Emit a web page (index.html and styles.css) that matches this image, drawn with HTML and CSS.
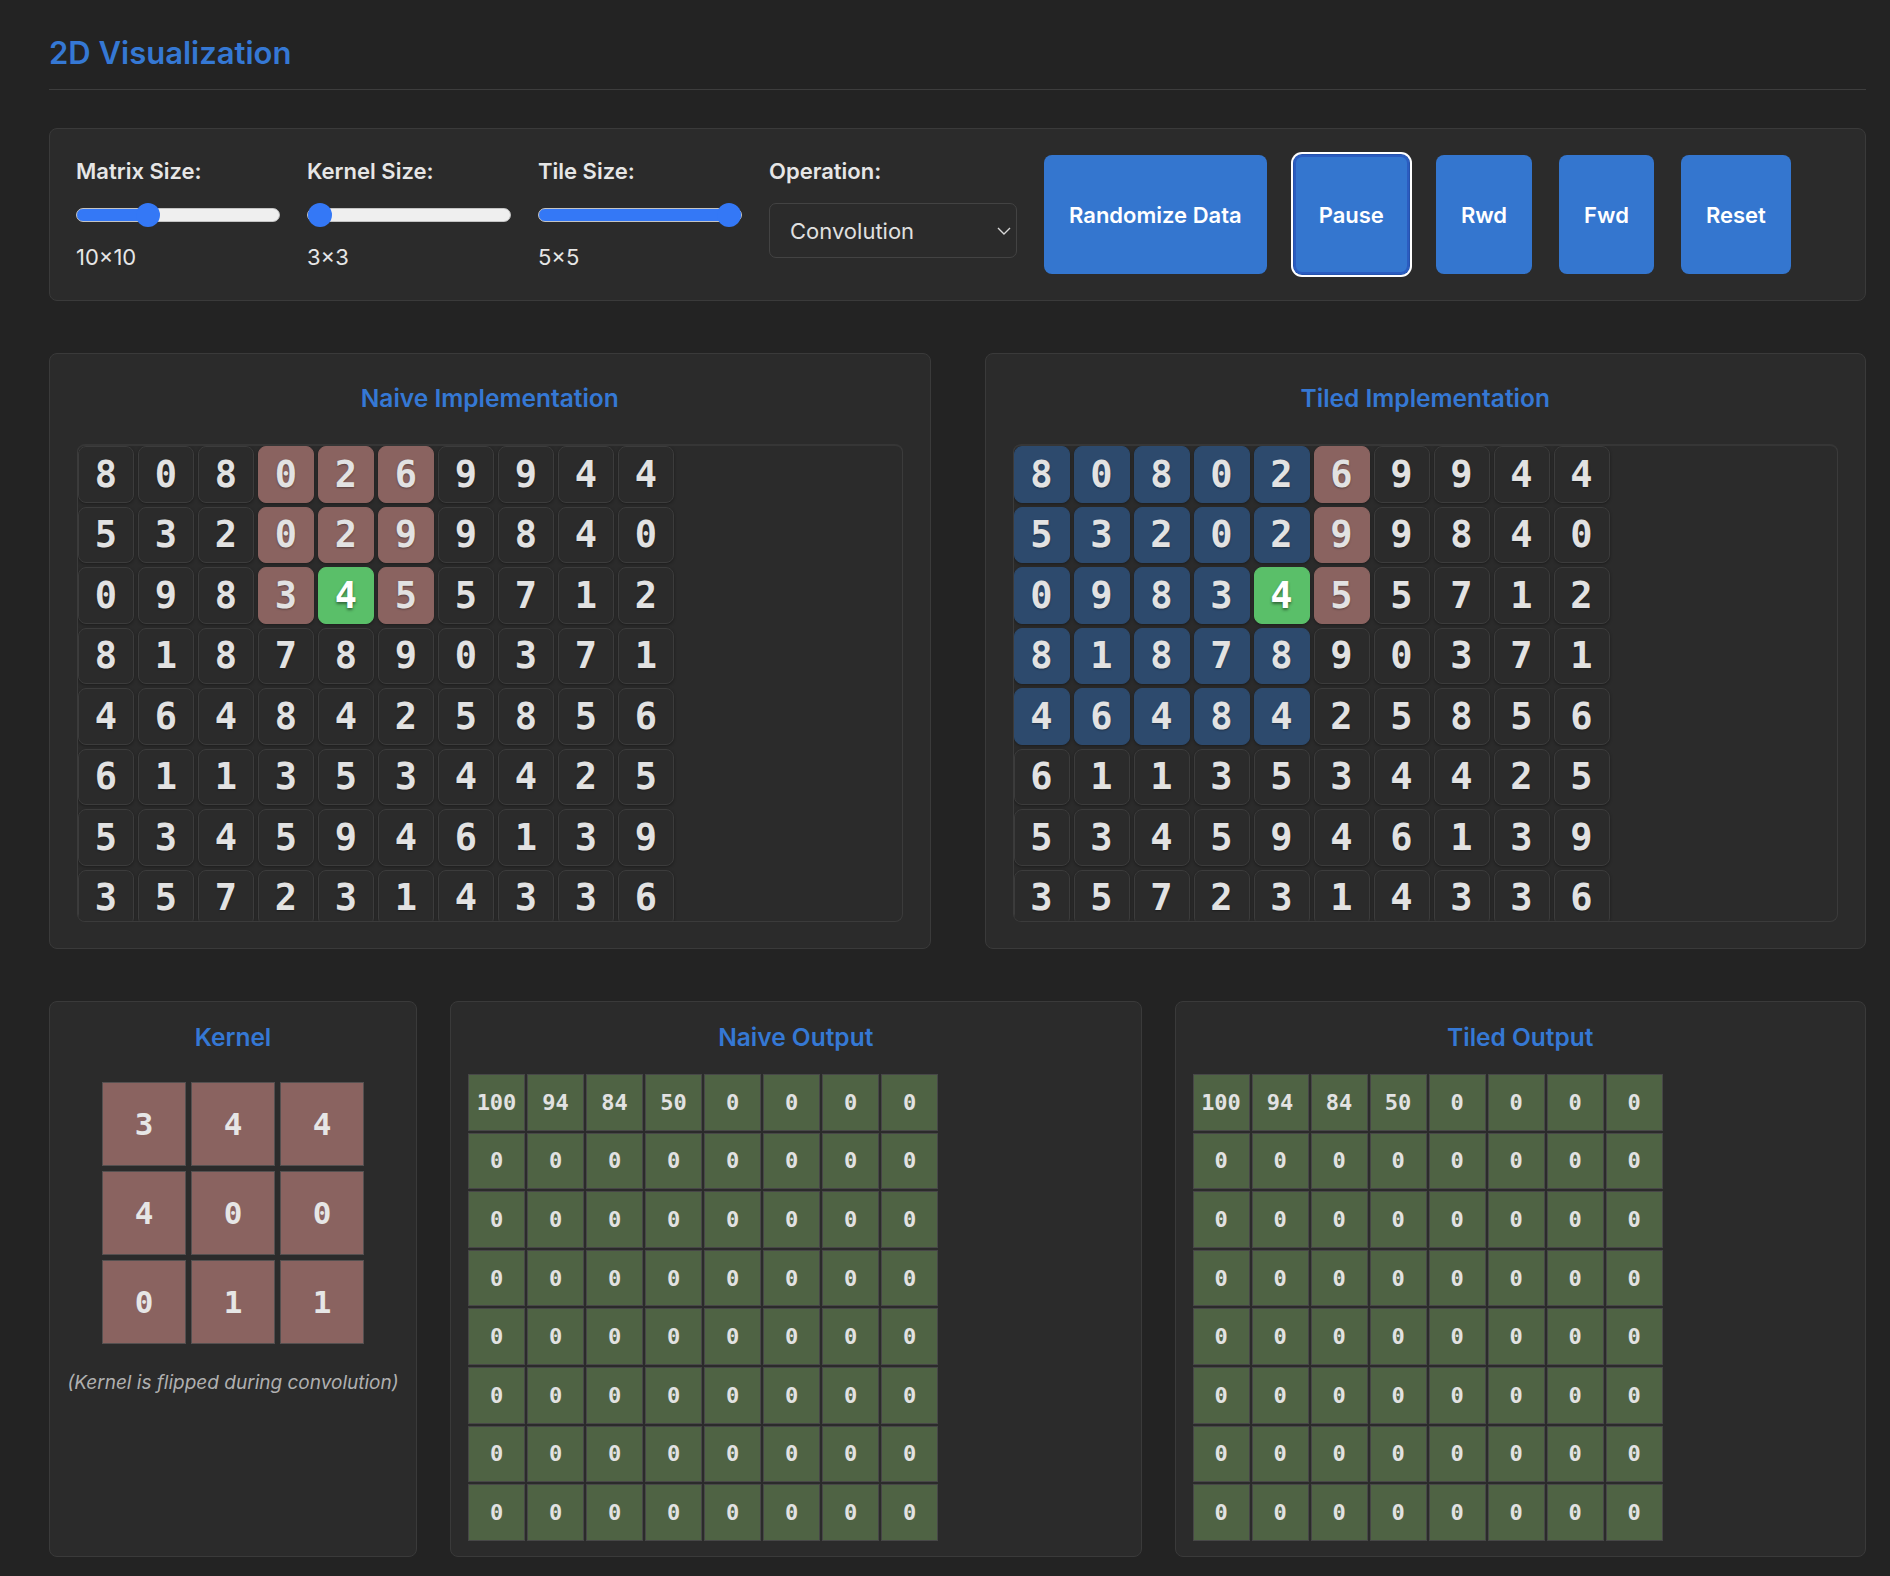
FILE: index.html
```html
<!DOCTYPE html>
<html lang="en">
<head>
<meta charset="utf-8">
<title>2D Visualization</title>
<link rel="stylesheet" href="styles.css">
</head>
<body>
<div class="page">
  <h2 class="section-title">2D Visualization</h2>

  <div class="controls">
    <div class="control">
      <label class="control-label">Matrix Size:</label>
      <input class="slider" type="range" min="5" max="20" value="10" style="--fill: 36%">
      <span class="control-value">10×10</span>
    </div>
    <div class="control">
      <label class="control-label">Kernel Size:</label>
      <input class="slider" type="range" min="3" max="7" step="2" value="3" style="--fill: 6%">
      <span class="control-value">3×3</span>
    </div>
    <div class="control">
      <label class="control-label">Tile Size:</label>
      <input class="slider" type="range" min="2" max="5" value="5" style="--fill: 100%">
      <span class="control-value">5×5</span>
    </div>
    <div class="control">
      <label class="control-label">Operation:</label>
      <div class="select-wrap">
        <select class="select">
          <option>Convolution</option>
        </select>
        <svg class="chev" width="14" height="8" viewBox="0 0 14 8"><path d="M1 1 L7 7 L13 1" stroke="#d8d8d8" stroke-width="1.4" fill="none"/></svg>
      </div>
    </div>
    <button class="btn">Randomize Data</button>
    <button class="btn btn-focus">Pause</button>
    <button class="btn">Rwd</button>
    <button class="btn">Fwd</button>
    <button class="btn">Reset</button>
  </div>

  <div class="viz-row">
    <div class="panel">
      <h3 class="panel-title">Naive Implementation</h3>
      <div class="matrix">
        <div class="mrow"><div class="cell">8</div><div class="cell">0</div><div class="cell">8</div><div class="cell win">0</div><div class="cell win">2</div><div class="cell win">6</div><div class="cell">9</div><div class="cell">9</div><div class="cell">4</div><div class="cell">4</div></div>
        <div class="mrow"><div class="cell">5</div><div class="cell">3</div><div class="cell">2</div><div class="cell win">0</div><div class="cell win">2</div><div class="cell win">9</div><div class="cell">9</div><div class="cell">8</div><div class="cell">4</div><div class="cell">0</div></div>
        <div class="mrow"><div class="cell">0</div><div class="cell">9</div><div class="cell">8</div><div class="cell win">3</div><div class="cell cur">4</div><div class="cell win">5</div><div class="cell">5</div><div class="cell">7</div><div class="cell">1</div><div class="cell">2</div></div>
        <div class="mrow"><div class="cell">8</div><div class="cell">1</div><div class="cell">8</div><div class="cell">7</div><div class="cell">8</div><div class="cell">9</div><div class="cell">0</div><div class="cell">3</div><div class="cell">7</div><div class="cell">1</div></div>
        <div class="mrow"><div class="cell">4</div><div class="cell">6</div><div class="cell">4</div><div class="cell">8</div><div class="cell">4</div><div class="cell">2</div><div class="cell">5</div><div class="cell">8</div><div class="cell">5</div><div class="cell">6</div></div>
        <div class="mrow"><div class="cell">6</div><div class="cell">1</div><div class="cell">1</div><div class="cell">3</div><div class="cell">5</div><div class="cell">3</div><div class="cell">4</div><div class="cell">4</div><div class="cell">2</div><div class="cell">5</div></div>
        <div class="mrow"><div class="cell">5</div><div class="cell">3</div><div class="cell">4</div><div class="cell">5</div><div class="cell">9</div><div class="cell">4</div><div class="cell">6</div><div class="cell">1</div><div class="cell">3</div><div class="cell">9</div></div>
        <div class="mrow"><div class="cell">3</div><div class="cell">5</div><div class="cell">7</div><div class="cell">2</div><div class="cell">3</div><div class="cell">1</div><div class="cell">4</div><div class="cell">3</div><div class="cell">3</div><div class="cell">6</div></div>
      </div>
    </div>

    <div class="panel">
      <h3 class="panel-title">Tiled Implementation</h3>
      <div class="matrix">
        <div class="mrow"><div class="cell tile">8</div><div class="cell tile">0</div><div class="cell tile">8</div><div class="cell tile">0</div><div class="cell tile">2</div><div class="cell win">6</div><div class="cell">9</div><div class="cell">9</div><div class="cell">4</div><div class="cell">4</div></div>
        <div class="mrow"><div class="cell tile">5</div><div class="cell tile">3</div><div class="cell tile">2</div><div class="cell tile">0</div><div class="cell tile">2</div><div class="cell win">9</div><div class="cell">9</div><div class="cell">8</div><div class="cell">4</div><div class="cell">0</div></div>
        <div class="mrow"><div class="cell tile">0</div><div class="cell tile">9</div><div class="cell tile">8</div><div class="cell tile">3</div><div class="cell cur">4</div><div class="cell win">5</div><div class="cell">5</div><div class="cell">7</div><div class="cell">1</div><div class="cell">2</div></div>
        <div class="mrow"><div class="cell tile">8</div><div class="cell tile">1</div><div class="cell tile">8</div><div class="cell tile">7</div><div class="cell tile">8</div><div class="cell">9</div><div class="cell">0</div><div class="cell">3</div><div class="cell">7</div><div class="cell">1</div></div>
        <div class="mrow"><div class="cell tile">4</div><div class="cell tile">6</div><div class="cell tile">4</div><div class="cell tile">8</div><div class="cell tile">4</div><div class="cell">2</div><div class="cell">5</div><div class="cell">8</div><div class="cell">5</div><div class="cell">6</div></div>
        <div class="mrow"><div class="cell">6</div><div class="cell">1</div><div class="cell">1</div><div class="cell">3</div><div class="cell">5</div><div class="cell">3</div><div class="cell">4</div><div class="cell">4</div><div class="cell">2</div><div class="cell">5</div></div>
        <div class="mrow"><div class="cell">5</div><div class="cell">3</div><div class="cell">4</div><div class="cell">5</div><div class="cell">9</div><div class="cell">4</div><div class="cell">6</div><div class="cell">1</div><div class="cell">3</div><div class="cell">9</div></div>
        <div class="mrow"><div class="cell">3</div><div class="cell">5</div><div class="cell">7</div><div class="cell">2</div><div class="cell">3</div><div class="cell">1</div><div class="cell">4</div><div class="cell">3</div><div class="cell">3</div><div class="cell">6</div></div>
      </div>
    </div>
  </div>

  <div class="bottom-row">
    <div class="bpanel kernel-panel">
      <h3 class="panel-title">Kernel</h3>
      <div class="kgrid">
        <div class="kcell">3</div><div class="kcell">4</div><div class="kcell">4</div>
        <div class="kcell">4</div><div class="kcell">0</div><div class="kcell">0</div>
        <div class="kcell">0</div><div class="kcell">1</div><div class="kcell">1</div>
      </div>
      <p class="caption">(Kernel is flipped during convolution)</p>
    </div>

    <div class="bpanel out-panel">
      <h3 class="panel-title">Naive Output</h3>
      <div class="ogrid">
        <div class="ocell">100</div><div class="ocell">94</div><div class="ocell">84</div><div class="ocell">50</div><div class="ocell">0</div><div class="ocell">0</div><div class="ocell">0</div><div class="ocell">0</div>
        <div class="ocell">0</div><div class="ocell">0</div><div class="ocell">0</div><div class="ocell">0</div><div class="ocell">0</div><div class="ocell">0</div><div class="ocell">0</div><div class="ocell">0</div>
        <div class="ocell">0</div><div class="ocell">0</div><div class="ocell">0</div><div class="ocell">0</div><div class="ocell">0</div><div class="ocell">0</div><div class="ocell">0</div><div class="ocell">0</div>
        <div class="ocell">0</div><div class="ocell">0</div><div class="ocell">0</div><div class="ocell">0</div><div class="ocell">0</div><div class="ocell">0</div><div class="ocell">0</div><div class="ocell">0</div>
        <div class="ocell">0</div><div class="ocell">0</div><div class="ocell">0</div><div class="ocell">0</div><div class="ocell">0</div><div class="ocell">0</div><div class="ocell">0</div><div class="ocell">0</div>
        <div class="ocell">0</div><div class="ocell">0</div><div class="ocell">0</div><div class="ocell">0</div><div class="ocell">0</div><div class="ocell">0</div><div class="ocell">0</div><div class="ocell">0</div>
        <div class="ocell">0</div><div class="ocell">0</div><div class="ocell">0</div><div class="ocell">0</div><div class="ocell">0</div><div class="ocell">0</div><div class="ocell">0</div><div class="ocell">0</div>
        <div class="ocell">0</div><div class="ocell">0</div><div class="ocell">0</div><div class="ocell">0</div><div class="ocell">0</div><div class="ocell">0</div><div class="ocell">0</div><div class="ocell">0</div>
      </div>
    </div>

    <div class="bpanel out-panel">
      <h3 class="panel-title">Tiled Output</h3>
      <div class="ogrid">
        <div class="ocell">100</div><div class="ocell">94</div><div class="ocell">84</div><div class="ocell">50</div><div class="ocell">0</div><div class="ocell">0</div><div class="ocell">0</div><div class="ocell">0</div>
        <div class="ocell">0</div><div class="ocell">0</div><div class="ocell">0</div><div class="ocell">0</div><div class="ocell">0</div><div class="ocell">0</div><div class="ocell">0</div><div class="ocell">0</div>
        <div class="ocell">0</div><div class="ocell">0</div><div class="ocell">0</div><div class="ocell">0</div><div class="ocell">0</div><div class="ocell">0</div><div class="ocell">0</div><div class="ocell">0</div>
        <div class="ocell">0</div><div class="ocell">0</div><div class="ocell">0</div><div class="ocell">0</div><div class="ocell">0</div><div class="ocell">0</div><div class="ocell">0</div><div class="ocell">0</div>
        <div class="ocell">0</div><div class="ocell">0</div><div class="ocell">0</div><div class="ocell">0</div><div class="ocell">0</div><div class="ocell">0</div><div class="ocell">0</div><div class="ocell">0</div>
        <div class="ocell">0</div><div class="ocell">0</div><div class="ocell">0</div><div class="ocell">0</div><div class="ocell">0</div><div class="ocell">0</div><div class="ocell">0</div><div class="ocell">0</div>
        <div class="ocell">0</div><div class="ocell">0</div><div class="ocell">0</div><div class="ocell">0</div><div class="ocell">0</div><div class="ocell">0</div><div class="ocell">0</div><div class="ocell">0</div>
        <div class="ocell">0</div><div class="ocell">0</div><div class="ocell">0</div><div class="ocell">0</div><div class="ocell">0</div><div class="ocell">0</div><div class="ocell">0</div><div class="ocell">0</div>
      </div>
    </div>
  </div>
</div>
</body>
</html>
```
FILE: styles.css
```css
* { box-sizing: border-box; }

body {
  margin: 0;
  background: #232323;
  color: #e0e0e0;
  font-family: Inter, "Noto Sans", "Liberation Sans", sans-serif;
}

.page {
  padding: 34px 24px 18px 49px;
}

.section-title {
  margin: 0;
  font-size: 31px;
  line-height: 38px;
  font-weight: 600;
  color: #3578d4;
  padding-bottom: 17px;
  border-bottom: 1px solid #3d3d3d;
}

/* ---------- controls ---------- */
.controls {
  margin-top: 38px;
  background: #2b2b2b;
  border: 1px solid #3a3a3a;
  border-radius: 8px;
  padding: 26px;
  display: flex;
  gap: 27px;
  align-items: stretch;
}

.control {
  display: flex;
  flex-direction: column;
  align-items: flex-start;
}

.control-label {
  font-size: 22px;
  line-height: 33px;
  font-weight: 600;
  color: #e6e6e6;
}

.control-value {
  font-size: 22px;
  line-height: 33px;
  color: #e6e6e6;
}

.slider {
  -webkit-appearance: none;
  appearance: none;
  width: 204px;
  height: 26px;
  margin: 14px 0 13px;
  background: transparent;
  padding: 0;
}

.slider::-webkit-slider-runnable-track {
  height: 14px;
  border-radius: 7px;
  box-sizing: border-box;
  border: 1px solid #c4c4c4;
  background: linear-gradient(to right, #3478f6 var(--fill), #efefef var(--fill));
}

.slider::-webkit-slider-thumb {
  -webkit-appearance: none;
  appearance: none;
  width: 24px;
  height: 24px;
  margin-top: -6px;
  border-radius: 50%;
  background: #3478f6;
  border: none;
}

.select-wrap {
  position: relative;
  margin-top: 15px;
  width: 248px;
  height: 55px;
}

.select {
  -webkit-appearance: none;
  appearance: none;
  width: 100%;
  height: 100%;
  background: #2b2b2b;
  border: 1px solid #434343;
  border-radius: 7px;
  color: #e0e0e0;
  font-family: Inter, "Noto Sans", sans-serif;
  font-size: 22px;
  padding: 0 20px;
}

.chev {
  position: absolute;
  right: 6px;
  top: 24px;
}

.btn {
  background: #3476cf;
  color: #fff;
  border: none;
  border-radius: 8px;
  font-family: Inter, "Noto Sans", sans-serif;
  font-size: 22px;
  font-weight: 600;
  padding: 0 25px;
}

.btn-focus {
  box-shadow: inset 0 0 0 2px #2b5cc0, 0 0 0 1px #2452ad, 0 0 0 3px #ffffff;
}

/* ---------- visualization panels ---------- */
.viz-row {
  margin-top: 52px;
  display: flex;
  gap: 54px;
}

.panel {
  flex: 1;
  background: #2b2b2b;
  border: 1px solid #3a3a3a;
  border-radius: 8px;
  padding: 26px 27px;
}

.panel-title {
  margin: 0 0 28px;
  text-align: center;
  font-size: 24.5px;
  line-height: 36px;
  font-weight: 600;
  color: #3578d4;
}

.matrix {
  height: 478px;
  overflow: hidden;
  border: 1px solid #3b3b3b;
  border-top: 2px solid #363636;
  border-radius: 8px;
  display: flex;
  flex-direction: column;
  gap: 4px;
}

.mrow {
  display: flex;
  gap: 4px;
  flex: none;
}

.cell {
  flex: none;
  width: 56px;
  height: 56.5px;
  display: flex;
  align-items: center;
  justify-content: center;
  border: 1px solid #3c3c3c;
  border-radius: 8px;
  background: #2b2b2b;
  font-family: "DejaVu Sans Mono", "Liberation Mono", monospace;
  font-weight: 700;
  font-size: 37px;
  color: #e2e2e2;
  box-shadow: 0 1px 3px rgba(0, 0, 0, 0.35);
  text-shadow: 0 1px 2px rgba(0, 0, 0, 0.35);
}

.cell.win {
  background: #8a6360;
  border-color: #8a6360;
}

.cell.cur {
  background: #5abf69;
  border-color: #5abf69;
  color: #ffffff;
  text-shadow: 0 2px 3px rgba(0, 0, 0, 0.45);
}

.cell.tile {
  background: #2d4a6d;
  border-color: #2d4a6d;
}

/* ---------- bottom row ---------- */
.bottom-row {
  margin-top: 52px;
  display: flex;
  gap: 33px;
  align-items: stretch;
}

.bpanel {
  background: #2b2b2b;
  border: 1px solid #3a3a3a;
  border-radius: 8px;
  padding: 17px 17px 15px;
}

.bpanel .panel-title {
  margin-bottom: 19px;
}

.kernel-panel {
  flex: 0 0 368px;
}

.out-panel {
  flex: 1;
}

.kgrid {
  margin-top: 27px;
  display: grid;
  grid-template-columns: repeat(3, 84px);
  grid-auto-rows: 84px;
  gap: 5px;
  justify-content: center;
}

.kcell {
  display: flex;
  align-items: center;
  justify-content: center;
  background: #8a6360;
  border: 1px solid #555050;
  font-family: "DejaVu Sans Mono", "Liberation Mono", monospace;
  font-weight: 700;
  font-size: 31px;
  color: #e6e6e6;
}

.caption {
  margin: 25px 0 0;
  text-align: center;
  font-style: italic;
  font-size: 19px;
  line-height: 27px;
  color: #b0b0b0;
}

.ogrid {
  display: grid;
  grid-template-columns: repeat(8, 57px);
  grid-auto-rows: 56.6px;
  gap: 2px;
}

.ocell {
  display: flex;
  align-items: center;
  justify-content: center;
  background: #4f6344;
  border: 1px solid #474747;
  font-family: "DejaVu Sans Mono", "Liberation Mono", monospace;
  font-weight: 700;
  font-size: 22px;
  color: #e2e2e2;
}
```
